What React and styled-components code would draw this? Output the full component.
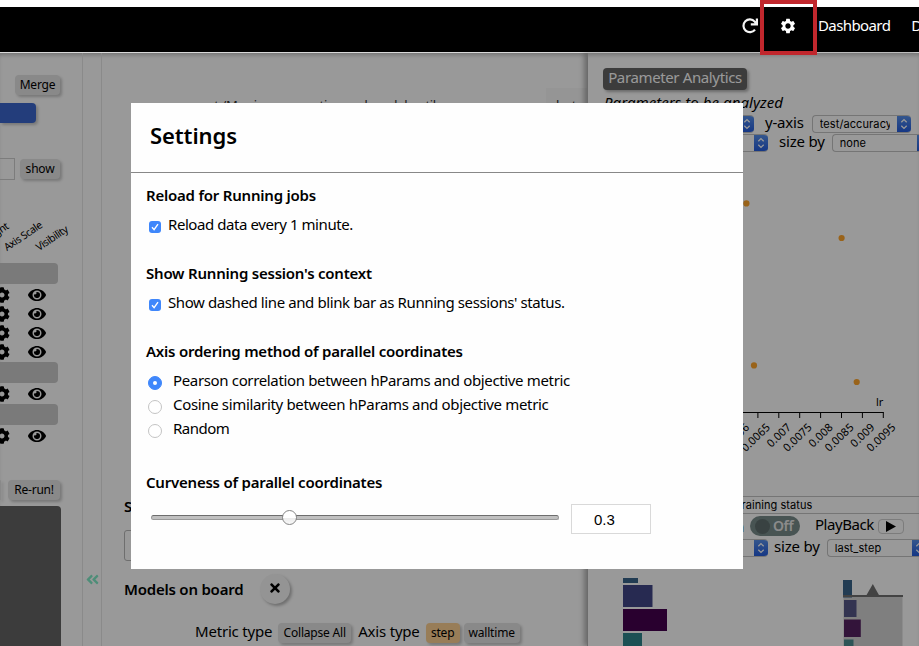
import React from "react";
import styled, { createGlobalStyle, css } from "styled-components";
import { FaEye, FaCog, FaAngleDoubleLeft, FaTimes } from "react-icons/fa";
import { MdSettings } from "react-icons/md";

const Global = createGlobalStyle`
  * { box-sizing: border-box; }
  html, body { margin: 0; padding: 0; overflow: hidden; }
  body { background: #fff; color: #000; font: 400 15px/20px "Noto Sans", sans-serif; letter-spacing: -0.37px; }
  svg { display: block; flex: none; }
`;

const Page = styled.div`
  width: 919px; height: 646px; overflow: hidden; position: relative;
  display: flex; flex-direction: column; padding-top: 7px;
`;
const Header = styled.header`
  flex: none; height: 45px; background: #000; color: #fff;
  display: flex; align-items: center; padding: 0 0 8px 741px; white-space: nowrap;
`;
const HeaderIcon = styled.span`
  width: ${p => p.$w}px; display: flex; flex: none;
`;
const NavLink = styled.a`
  margin-right: 21px; letter-spacing: -0.6px; color: #fff; padding-bottom: 1px;
`;
const Highlight = styled.div`
  position: absolute; left: 760px; top: 0; width: 57px; height: 55px;
  border: 4px solid #c1272d; z-index: 4;
`;
const Workspace = styled.main`
  flex: 1; min-height: 0; display: flex; align-items: stretch;
  border-top: 1px solid #d8d8d8;
  box-shadow: inset 0 4px 4px -2px rgba(0,0,0,.25);
`;
const Dim = styled.div`
  position: absolute; inset: 53px 0 0 0; background: rgba(0,0,0,.4); z-index: 2;
`;

/* Left column */
const Sidebar = styled.aside`
  width: 83px; flex: none; border-right: 1px solid #e6e6e6; overflow: hidden;
  display: flex; flex-direction: column; padding-top: 22px;
`;
const Line = styled.div`
  display: flex; align-items: center; flex: none; white-space: nowrap;
  height: ${p => p.$h || 20}px; margin-top: ${p => p.$mt || 0}px; padding-left: ${p => p.$pl || 0}px;
`;
const Caption = styled.span`
  padding-bottom: ${p => p.$up || 4}px; letter-spacing: ${p => p.$ls || -0.2}px;
`;
const Btn = styled.button`
  border: 0; border-radius: 4px; padding: 0 0 1px; flex: none;
  width: ${p => p.$w}px; height: 20px; margin-left: ${p => p.$ml || 0}px;
  font: 400 12px/19px "Noto Sans", sans-serif; letter-spacing: ${p => p.$ls || -0.2}px; color: #000;
  background: ${p => p.$active ? "#fed093" : "#e4e4e4"};
  box-shadow: 2px 2px 3px rgba(0,0,0,.22);
`;
const BlueTab = styled.div`
  width: 36px; height: 20px; margin-top: 8px; background: #3b67cd; border-radius: 0 4px 4px 0; flex: none;
  box-shadow: 2px 2px 3px rgba(0,0,0,.22);
`;
const Stub = styled.div`
  width: 15px; height: 22px; border: 1px solid #cfcfcf; border-left: 0; margin-right: 5px;
`;
const Slants = styled.div`
  display: flex; height: 20px; margin: 57px 0 0 -24px; flex: none;
`;
const Slant = styled.span`
  width: 32px; flex: none; white-space: nowrap; font-size: 10.5px; letter-spacing: -0.45px;
  transform: rotate(-34deg); transform-origin: 0 80%;
`;
const GroupBar = styled.div`
  width: 58px; height: 21px; background: #cbcbcb; border-radius: 0 4px 4px 0; flex: none; margin-bottom: 1px;
`;
const AxisRow = styled.div`
  height: 19px; display: flex; align-items: center; margin-left: -6px; gap: 18px; flex: none;
`;
const GroupBox = styled.div`
  padding-bottom: 1px;
`;
const Groups = styled.div`
  margin-top: 6px; flex: none;
`;
const DarkPanel = styled.div`
  flex: 1; width: 61px; margin-top: 6px; background: #646464; border-radius: 0 4px 0 0;
`;
const Gutter = styled.div`
  width: 19px; flex: none; border-right: 1px solid #e6e6e6; color: #82ecc8;
  display: flex; justify-content: center; padding: 519px 0 0 1px;
`;

/* Middle column */
const Board = styled.section`
  width: 485px; flex: none; overflow: hidden; display: flex; flex-direction: column; white-space: nowrap;
  padding: 35px 0 0 22px;
`;
const LogLine = styled.div`
  display: flex; align-items: flex-start; justify-content: space-between; height: 30px; flex: none;
  padding-left: 75px; line-height: 34px; font-size: 13px; color: #333;
`;
const LogTag = styled.span`
  width: 41px; padding-left: 10px; line-height: 34px; background: #f8f8f8;
`;
const Heading = styled.h3`
  margin: ${p => p.$mt || 0}px 0 0; font-size: 15px; line-height: 22px; font-weight: 600; letter-spacing: -0.22px;
`;
const Field = styled.div`
  height: 31px; width: 400px; margin-top: 13px; border: 1px solid #b8b8b8; border-radius: 3px; flex: none;
`;
const Round = styled.button`
  width: 30px; height: 30px; border: 0; padding: 0 1px 2px 0; border-radius: 50%; margin-left: 17px; background: #f7f7f7;
  display: flex; align-items: center; justify-content: center; color: #000;
  box-shadow: 2px 2px 3px rgba(0,0,0,.28);
`;

/* Right column */
const Analytics = styled.section`
  flex: 1; min-width: 0; overflow: hidden; display: flex; flex-direction: column; padding-top: 15px; white-space: nowrap;
  border-left: 1px solid #b5b5b5; box-shadow: -3px 0 5px rgba(0,0,0,.3);
`;
const Title = styled.div`
  margin-left: 15px; width: 144px; height: 22px; border-radius: 4px; background: #646464; color: #fff; flex: none;
  line-height: 19px; text-align: center; box-shadow: 2px 2px 3px rgba(0,0,0,.3);
`;
const Note = styled.em`
  margin: 2px 0 1px 16px; line-height: 20px; letter-spacing: 0.06px;
`;
const Select = styled.span`
  width: ${p => p.$w}px; height: 18px; flex: none; display: inline-flex; align-items: center; justify-content: space-between;
  margin-left: ${p => p.$ml || 0}px; margin-right: ${p => p.$mr || 0}px;
  padding-left: 7px; overflow: hidden; border: 1px solid #c4c4c4; border-right: 0; border-radius: 4px;
  font: 400 11px/16px Inter, sans-serif; letter-spacing: 0.1px;
`;
const Value = styled.span`
  width: ${p => p.$w || 70}px; overflow: hidden;
`;
const Stepper = styled.span`
  width: 14px; height: 18px; flex: none; background: linear-gradient(#5b93ec, #2059dd);
  display: flex; align-items: center; justify-content: center;
`;
const Chart = styled.div`
  flex: none; height: ${p => p.$h}px; margin-top: ${p => p.$mt || 0}px;
`;
const StatusBar = styled.div`
  height: 18px; border: solid #c4c4c4; border-width: 1px 0; font: 400 11px/16px Inter, sans-serif; flex: none;
  padding-left: 147px; letter-spacing: 0.06px;
`;
const Toggle = styled.span`
  width: 50px; height: 20px; border-radius: 10px; background: #788c8b; color: #e8e8e8; display: flex; align-items: center;
  padding-left: 5px; gap: 3px; font-weight: 600; font-size: 14px; line-height: 18px; margin-right: 15px;
`;
const Knob = styled.i`
  width: 15px; height: 15px; border-radius: 50%; background: #5f6f6e;
`;
const Play = styled.span`
  width: 26px; height: 15px; margin: 1px 0 0 4px; border: 1px solid #cfcfcf; border-radius: 4px;
  display: flex; align-items: center; justify-content: center;
`;

/* Dialog */
const Dialog = styled.div`
  position: absolute; left: 131px; top: 103px; width: 612px; height: 466px; background: #fefefe; z-index: 3;
  display: flex; flex-direction: column; white-space: nowrap;
`;
const DialogHead = styled.header`
  height: 70px; flex: none; border-bottom: 1px solid #888; padding: 16px 19px;
`;
const DialogTitle = styled.h2`
  margin: 0; font-size: 22px; line-height: 32px; font-weight: 600; letter-spacing: -0.1px;
`;
const Section = styled.section`
  height: ${p => p.$h}px; padding: 11px 15px 0;
`;
const Option = styled.label`
  display: flex; align-items: center; height: 24px; margin-top: ${p => p.$mt || 0}px; padding-left: ${p => p.$radio ? 2 : 3}px;
`;
const mark = css`
  flex: none; display: flex; align-items: center; justify-content: center; position: relative; top: 1px;
`;
const Check = styled.span`
  ${mark} width: 12px; height: 12px; border-radius: 3px; background: #3f87fb; margin-right: 7px;
`;
const Radio = styled.span`
  ${mark} width: 14px; height: 14px; border-radius: 50%; margin-right: 11px;
  background: ${p => p.$on ? "#3f87fb" : "#fff"};
  border: 1px solid ${p => p.$on ? "#3f87fb" : "#c4c4c4"};
  &::after { content: ""; width: 4px; height: 4px; border-radius: 50%; background: #fff; }
`;
const SliderRow = styled.div`
  display: flex; align-items: center; margin: 11px 0 0 5px; gap: 12px;
`;
const Track = styled.div`
  width: 408px; height: 5px; border-radius: 3px; background: #c0c0c0; border: 1px solid #999; border-top: 1px solid #6d6d6d;
  display: flex; align-items: center; margin-top: -4px;
`;
const Thumb = styled.span`
  width: 15px; height: 15px; margin-left: 130px; border-radius: 50%; border: 1px solid #858585; flex: none;
  background: linear-gradient(#fff 0 50%, #ececec 55%, #f8f8f8);
`;
const NumberBox = styled.span`
  width: 80px; height: 30px; border: 1px solid #d9d9d9; padding-left: 22px; background: #fff;
  font: 400 15px/29px "Liberation Sans", Arial, sans-serif; letter-spacing: 0;
`;

const Arrows = () => (
  <Stepper><svg width="8" height="12" viewBox="0 0 8 12" fill="none" stroke="#fff" strokeWidth="1.3"><path d="M1.3 4.3 4 1.6l2.7 2.7M1.3 7.7 4 10.4l2.7-2.7" /></svg></Stepper>
);
const Picker = ({ value, vw, ...rest }) => (
  <Select {...rest}><Value $w={vw}>{value}</Value><Arrows /></Select>
);
const Group = ({ rows }) => (
  <GroupBox>
    <GroupBar />
    {Array.from({ length: rows }, (_, i) => (
      <AxisRow key={i}><FaCog size={16} /><FaEye size={18} /></AxisRow>
    ))}
  </GroupBox>
);
const Tick = () => <svg width="12" height="12" viewBox="0 0 12 12" fill="none" stroke="#fff" strokeWidth="1.4"><path d="M3 6.3 5.1 8.6 9 3.2" /></svg>;

const ticks = [["0.006", 737], ["0.0065", 757.9], ["0.007", 778.8], ["0.0075", 799.7], ["0.008", 820.6], ["0.0085", 841.5], ["0.009", 862.4], ["0.0095", 883.3]];

export default function App() {
  return (
    <Page>
      <Global />
      <Header>
        <HeaderIcon $w={38}>
          <svg width="18" height="18" viewBox="0 0 18 18" fill="none" stroke="#f4f4f4" strokeWidth="2.2"><path d="M14 12.6A6.4 6.4 0 1 1 13.7 4.6L15 6.3M15.9 1.4V7.4H9.8" /></svg>
        </HeaderIcon>
        <HeaderIcon $w={39}><MdSettings size={18} /></HeaderIcon>
        <NavLink>Dashboard</NavLink>
        <NavLink>Docs</NavLink>
      </Header>
      <Workspace>
        <Sidebar>
          <Line $pl={15}><Btn $w={45}>Merge</Btn></Line>
          <BlueTab />
          <Line $mt={35} $h={22}><Stub /><Btn $w={40}>show</Btn></Line>
          <Slants><Slant>Highlight</Slant><Slant>Axis Scale</Slant><Slant>Visibility</Slant></Slants>
          <Groups>
            <Group rows={4} />
            <Group rows={1} />
            <Group rows={1} />
          </Groups>
          <Line $mt={34}><Btn $w={1} /><Btn $w={52} $ml={7}>Re-run!</Btn></Line>
          <DarkPanel />
        </Sidebar>
        <Gutter><FaAngleDoubleLeft size={15} /></Gutter>
        <Board>
          <LogLine><span>not /Max is a summation and model until</span><LogTag>last</LogTag></LogLine>
          <Heading $mt={377}>Sessions</Heading>
          <Field />
          <Line $h={32} $mt={12}><Heading>Models on board</Heading><Round><FaTimes size={14} /></Round></Line>
          <Line $mt={18} $pl={71}>
            <Caption>Metric type</Caption><Btn $w={73} $ml={6}>Collapse All</Btn>
            <Line $pl={7}><Caption>Axis type</Caption></Line><Btn $w={34} $ml={6} $active>step</Btn><Btn $w={56} $ml={4}>walltime</Btn>
          </Line>
        </Board>
        <Analytics>
          <Title>Parameter Analytics</Title>
          <Note>Parameters to be analyzed</Note>
          <Line $mt={1} $h={19}><Picker $w={100} $ml={66} $mr={11} value="lr" /><Caption>y-axis</Caption><Picker $w={99} $ml={8} value="test/accuracy" vw={70} /></Line>
          <Line $h={19}><Picker $w={110} $ml={70} $mr={11} value="none" /><Caption>size by</Caption><Picker $w={99} $ml={7} value="none" /></Line>
          <Chart $h={344}>
            <svg width="331" height="344" viewBox="588 152 331 344">
              <g fill="#ffa52c"><circle cx="746.4" cy="203.4" r="3.1" /><circle cx="841.6" cy="238" r="3.1" /><circle cx="754" cy="365.4" r="3.1" /><circle cx="856.7" cy="382" r="3.1" /></g>
              <path d="M620 412.5H883.5" stroke="#000" />
              {ticks.map(([t, x]) => (
                <g key={t}><path d={`M${x} 412v6`} stroke="#000" />
                  <text transform={`translate(${x + 13} 428) rotate(-44)`} textAnchor="end" fontSize="11" letterSpacing="0.1">{t}</text></g>
              ))}
              <text x="876" y="406" fontSize="11" letterSpacing="0">lr</text>
            </svg>
          </Chart>
          <StatusBar>Training status</StatusBar>
          <Line $mt={2} $pl={147}><Line>n</Line><Line $pl={6}><Toggle><Knob />Off</Toggle></Line><Caption $ls={-0.42}>PlayBack</Caption>
            <Play><svg width="11" height="11" viewBox="0 0 11 11"><path d="M1 0 11 5.5 1 11z" /></svg></Play></Line>
          <Line $mt={2}><Picker $w={110} $ml={70} $mr={6} value="loss" /><Caption>size by</Caption><Picker $w={99} $ml={7} value="last_step" /></Line>
          <Chart $h={88}>
            <svg width="331" height="88" viewBox="588 558 331 88">
              <path fill="#39658a" d="M623 578h15v5h-15z" />
              <path fill="#424687" d="M623 585h29.500v22h-29.500z" />
              <path fill="#45004f" d="M623 609h44v22h-44z" />
              <path fill="#30868c" d="M623 633h19v13h-19z" />
              <path fill="#d4d4d4" d="M843.500 596h59v50h-59z" />
              <path fill="#39658a" d="M843 580h9v17.500h-9z" />
              <path fill="#565788" d="M844 600h12.500v17h-12.500z" />
              <path fill="#562261" d="M844 619.500h16.800v17.500h-16.800z" />
              <path fill="#4b8e92" d="M844 639.500h9.500v6.500h-9.500z" />
              <path stroke="#707070" strokeWidth="2" d="M843 596H903" />
              <path fill="#707070" d="M866 596 872.800 584 879.500 596z" />
            </svg>
          </Chart>
        </Analytics>
      </Workspace>
      <Dim />
      <Dialog>
        <DialogHead><DialogTitle>Settings</DialogTitle></DialogHead>
        <Section $h={78}><Heading>Reload for Running jobs</Heading>
          <Option $mt={8}><Check><Tick /></Check><Caption $ls={-0.43}>Reload data every 1 minute.</Caption></Option></Section>
        <Section $h={78}><Heading>Show Running session's context</Heading>
          <Option $mt={8}><Check><Tick /></Check><Caption $ls={-0.4}>Show dashed line and blink bar as Running sessions' status.</Caption></Option></Section>
        <Section $h={131}><Heading>Axis ordering method of parallel coordinates</Heading>
          <Option $radio $mt={8}><Radio $on /><Caption $ls={-0.35}>Pearson correlation between hParams and objective metric</Caption></Option>
          <Option $radio><Radio /><Caption $ls={-0.34}>Cosine similarity between hParams and objective metric</Caption></Option>
          <Option $radio><Radio /><Caption $ls={-0.5}>Random</Caption></Option></Section>
        <Section $h={100}><Heading>Curveness of parallel coordinates</Heading>
          <SliderRow><Track><Thumb /></Track><NumberBox>0.3</NumberBox></SliderRow></Section>
      </Dialog>
      <Highlight />
    </Page>
  );
}
